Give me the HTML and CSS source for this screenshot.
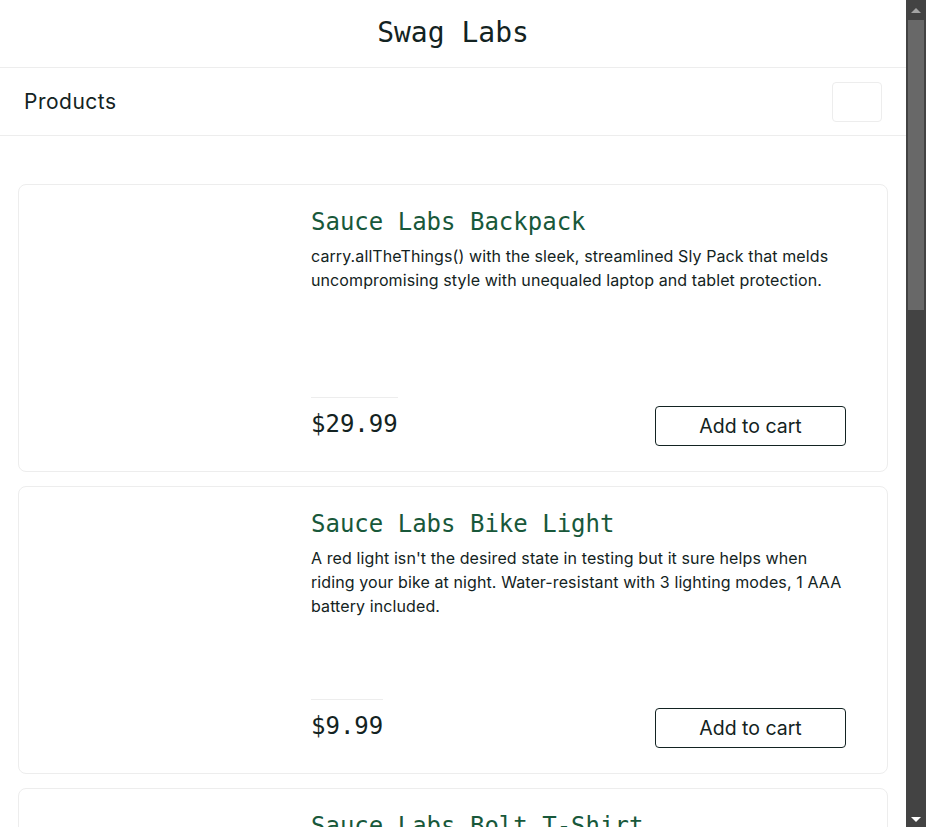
FILE: index.html
```html
<!DOCTYPE html>
<html lang="en">
<head>
<meta charset="utf-8">
<title>Swag Labs</title>
<link rel="stylesheet" href="styles.css">
</head>
<body>
<div class="page">
  <header class="primary-header">
    <div class="app-logo">Swag Labs</div>
  </header>
  <div class="secondary-header">
    <span class="title">Products</span>
    <span class="sort-box"></span>
  </div>
  <main class="inventory">
    <div class="item">
      <div class="item-img"></div>
      <div class="item-body">
        <div class="item-text">
          <div class="item-name">Sauce Labs Backpack</div>
          <div class="item-desc">carry.allTheThings() with the sleek, streamlined Sly Pack that melds uncompromising style with unequaled laptop and tablet protection.</div>
        </div>
        <div class="item-bottom">
          <div class="item-price">$29.99</div>
          <button class="btn">Add to cart</button>
        </div>
      </div>
    </div>
    <div class="item">
      <div class="item-img"></div>
      <div class="item-body">
        <div class="item-text">
          <div class="item-name">Sauce Labs Bike Light</div>
          <div class="item-desc">A red light isn't the desired state in testing but it sure helps when riding your bike at night. Water-resistant with 3 lighting modes, 1 AAA battery included.</div>
        </div>
        <div class="item-bottom">
          <div class="item-price">$9.99</div>
          <button class="btn">Add to cart</button>
        </div>
      </div>
    </div>
    <div class="item">
      <div class="item-img"></div>
      <div class="item-body">
        <div class="item-text">
          <div class="item-name">Sauce Labs Bolt T-Shirt</div>
          <div class="item-desc">Get your testing superhero on with the Sauce Labs bolt T-shirt. From American Apparel, 100% ringspun combed cotton, heather gray with red bolt.</div>
        </div>
        <div class="item-bottom">
          <div class="item-price">$15.99</div>
          <button class="btn">Add to cart</button>
        </div>
      </div>
    </div>
    <div class="item">
      <div class="item-img"></div>
      <div class="item-body">
        <div class="item-text">
          <div class="item-name">Sauce Labs Fleece Jacket</div>
          <div class="item-desc">It's not every day that you come across a midweight quarter-zip fleece jacket capable of handling everything from a relaxing day outdoors to a busy day at the office.</div>
        </div>
        <div class="item-bottom">
          <div class="item-price">$49.99</div>
          <button class="btn">Add to cart</button>
        </div>
      </div>
    </div>
    <div class="item">
      <div class="item-img"></div>
      <div class="item-body">
        <div class="item-text">
          <div class="item-name">Sauce Labs Onesie</div>
          <div class="item-desc">Rib snap infant onesie for the junior automation engineer in development. Reinforced 3-snap bottom closure, two-needle hemmed sleeved and bottom won't unravel.</div>
        </div>
        <div class="item-bottom">
          <div class="item-price">$7.99</div>
          <button class="btn">Add to cart</button>
        </div>
      </div>
    </div>
    <div class="item">
      <div class="item-img"></div>
      <div class="item-body">
        <div class="item-text">
          <div class="item-name">Test.allTheThings() T-Shirt (Red)</div>
          <div class="item-desc">This classic Sauce Labs t-shirt is perfect to wear when cozying up to your keyboard to automate a few tests. Super-soft and comfy ringspun combed cotton.</div>
        </div>
        <div class="item-bottom">
          <div class="item-price">$15.99</div>
          <button class="btn">Add to cart</button>
        </div>
      </div>
    </div>
  </main>
  <footer class="footer">
    <div class="footer-copy">© 2024 Sauce Labs. All Rights Reserved. Terms of Service | Privacy Policy</div>
  </footer>
</div>
<div class="scrollbar" aria-hidden="true">
  <div class="sb-btn"><span class="sb-arrow-up"></span></div>
  <div class="sb-thumb"></div>
  <div class="sb-fill"></div>
  <div class="sb-btn"><span class="sb-arrow-down"></span></div>
</div>
</body>
</html>
```

FILE: styles.css
```css
html {
  background: #ffffff;
}

body {
  margin: 0;
  background: #ffffff;
  color: #132322;
  font-family: Inter, "Open Sans", sans-serif;
}

.page {
  margin-right: 20px;
}

.primary-header {
  height: 67px;
  border-bottom: 1px solid #ededed;
  display: flex;
  align-items: center;
  justify-content: center;
}

.app-logo {
  font-family: "DejaVu Sans Mono", "Liberation Mono", monospace;
  font-size: 28px;
  line-height: 1;
  color: #132322;
  padding-bottom: 1px;
}

.secondary-header {
  height: 67px;
  border-bottom: 1px solid #ededed;
  display: flex;
  align-items: center;
  justify-content: space-between;
  padding: 0 24px;
}

.secondary-header .title {
  font-size: 21px;
  letter-spacing: 0.5px;
  font-weight: 400;
  color: #132322;
}

.sort-box {
  width: 48px;
  height: 38px;
  border: 1px solid #ededed;
  border-radius: 4px;
  background: #ffffff;
}

.inventory {
  padding: 48px 18px 40px 18px;
  display: flex;
  flex-direction: column;
  gap: 14px;
}

.item {
  box-sizing: border-box;
  height: 288px;
  border: 1px solid #ededed;
  border-radius: 8px;
  padding: 22px 41px 25px 20px;
  display: flex;
  gap: 20px;
  background: #ffffff;
}

.item-img {
  flex: 0 0 252px;
}

.item-body {
  flex: 1;
  display: flex;
  flex-direction: column;
  justify-content: space-between;
  min-width: 0;
}

.item-name {
  font-family: "DejaVu Sans Mono", "Liberation Mono", monospace;
  font-size: 24px;
  line-height: 30px;
  font-weight: 400;
  color: #18583a;
}

.item-desc {
  margin-top: 7px;
  margin-right: -6px;
  font-size: 16px;
  line-height: 24px;
  letter-spacing: 0.1px;
  color: #132322;
}

.item-bottom {
  display: flex;
  align-items: flex-end;
  justify-content: space-between;
}

.item-price {
  font-family: "DejaVu Sans Mono", "Liberation Mono", monospace;
  font-size: 24px;
  line-height: 30px;
  font-weight: 500;
  color: #132322;
  border-top: 1px solid #ededed;
  padding-top: 11px;
  padding-bottom: 7px;
}

.btn {
  box-sizing: border-box;
  width: 191px;
  height: 40px;
  border: 1px solid #132322;
  border-radius: 4px;
  background: #ffffff;
  color: #132322;
  font-family: Inter, "Open Sans", sans-serif;
  font-size: 19.5px;
  padding: 0;
}

.footer {
  background: #132322;
  height: 200px;
  display: flex;
  align-items: flex-end;
  justify-content: center;
}

.footer-copy {
  color: #ffffff;
  font-size: 14px;
  padding-bottom: 30px;
}

/* drawn browser scrollbar overlay */
.scrollbar {
  position: fixed;
  top: 0;
  right: 0;
  width: 20px;
  height: 100vh;
  background: #434343;
  display: flex;
  flex-direction: column;
}

.sb-btn {
  height: 20px;
  display: flex;
  align-items: center;
  justify-content: center;
}

.sb-arrow-up {
  width: 0;
  height: 0;
  border-left: 5px solid transparent;
  border-right: 5px solid transparent;
  border-bottom: 5px solid #a3a3a3;
}

.sb-arrow-down {
  width: 0;
  height: 0;
  border-left: 5px solid transparent;
  border-right: 5px solid transparent;
  border-top: 5px solid #ffffff;
  margin-top: 4px;
}

.sb-thumb {
  height: 290px;
  margin: 0 2px;
  background: #686868;
}

.sb-fill {
  flex: 1;
}
```
